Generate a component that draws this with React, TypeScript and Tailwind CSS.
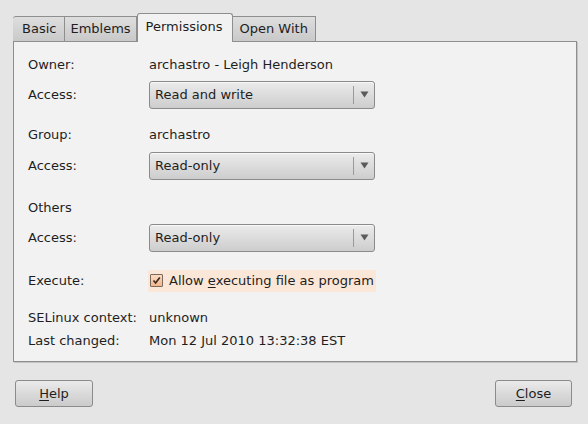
import React from "react";

const font = { fontFamily: '"DejaVu Sans", "Liberation Sans", sans-serif' };

function Combo({ value }: { value: string }) {
  return (
    <div className="flex h-[28px] w-[226px] items-center rounded-[3px] border border-[#8b8b8b] bg-[linear-gradient(180deg,#ebebeb_0%,#dcdcdc_50%,#cdcdcd_100%)] shadow-[inset_0_1px_0_rgba(255,255,255,0.7)]">
      <span className="flex-1 pl-[5px] text-[13px] text-[#1e1e1e]">{value}</span>
      <span className="h-[18px] w-px bg-[#9a9a9a]" />
      <span className="flex w-[20px] justify-center">
        <svg width="9" height="7" viewBox="0 0 9 7">
          <path d="M0.5 0.5 H8.5 L4.5 6.5 Z" fill="#5a5a5a" />
        </svg>
      </span>
    </div>
  );
}

function Row({ label, children, className = "" }: { label: string; children?: React.ReactNode; className?: string }) {
  return (
    <div className={`flex items-center ${className}`}>
      <span className="w-[121px] shrink-0">{label}</span>
      {children}
    </div>
  );
}

const inactiveTab =
  "flex h-[25px] items-center border border-b-0 border-l-0 border-[#8e8e8e] bg-[linear-gradient(180deg,#dedede_0%,#c9c9c9_100%)]";

export default function App() {
  return (
    <div
      style={font}
      className="flex h-[424px] w-[588px] flex-col bg-[#e5e5e5] pl-[13px] pr-[11px] pt-[13px] text-[13px] text-[#1e1e1e]"
    >
      <div className="flex items-end">
        <div className={`${inactiveTab} rounded-tl-[3px] border-l pl-[9px] pr-[8px]`}>Basic</div>
        <div className={`${inactiveTab} px-[5px]`}>Emblems</div>
        <div className="relative z-10 -mb-px flex h-[29px] items-center rounded-t-[3px] border border-b-0 border-[#8e8e8e] bg-[#f2f2f2] pb-[3px] pl-[8px] pr-[9px]">
          Permissions
        </div>
        <div className={`${inactiveTab} px-[7px]`}>Open With</div>
      </div>

      <div className="h-[321px] w-[564px] border border-[#8e8e8e] bg-[#f2f2f2] pl-[14px] pt-[9px] shadow-[1px_1px_0_#c4c4c4]">
        <Row label="Owner:" className="h-[27px]">
          <span>archastro - Leigh Henderson</span>
        </Row>
        <Row label="Access:" className="mt-[3px] h-[27px]">
          <Combo value="Read and write" />
        </Row>
        <Row label="Group:" className="mt-[13px] h-[27px]">
          <span>archastro</span>
        </Row>
        <Row label="Access:" className="mt-[4px] h-[27px]">
          <Combo value="Read-only" />
        </Row>
        <Row label="Others" className="mt-[15px] h-[27px]" />
        <Row label="Access:" className="mt-[3px] h-[27px]">
          <Combo value="Read-only" />
        </Row>
        <Row label="Execute:" className="mt-[16px] h-[27px]">
          <div className="-ml-[1px] flex h-[22px] items-center rounded-[2px] bg-[#fbe7d7] pl-[2px] pr-[2px]">
            <span className="flex h-[13px] w-[13px] items-center justify-center rounded-[1px] border border-[#7a6a5e] bg-[linear-gradient(180deg,#fcdcc4_0%,#f3b58c_100%)]">
              <svg width="9" height="9" viewBox="0 0 9 9">
                <path d="M1.5 4.5 L3.6 7 L7.8 1.5" stroke="#3a2a20" strokeWidth="1.7" fill="none" />
              </svg>
            </span>
            <span className="ml-[6px]">
              Allow <span className="underline underline-offset-2">e</span>xecuting file as program
            </span>
          </div>
        </Row>
        <Row label="SELinux context:" className="mt-[12px] h-[23px]">
          <span>unknown</span>
        </Row>
        <Row label="Last changed:" className="h-[23px]">
          <span>Mon 12 Jul 2010 13:32:38 EST</span>
        </Row>
      </div>

      <div className="mt-[18px] flex justify-between pl-[2px] pr-[5px]">
        <button className="h-[27px] w-[78px] rounded-[3px] border border-[#8b8b8b] bg-[linear-gradient(180deg,#ebebeb_0%,#dadada_50%,#cbcbcb_100%)]">
          <span className="underline underline-offset-2">H</span>elp
        </button>
        <button className="h-[27px] w-[77px] rounded-[3px] border border-[#8b8b8b] bg-[linear-gradient(180deg,#ebebeb_0%,#dadada_50%,#cbcbcb_100%)]">
          <span className="underline underline-offset-2">C</span>lose
        </button>
      </div>
    </div>
  );
}
